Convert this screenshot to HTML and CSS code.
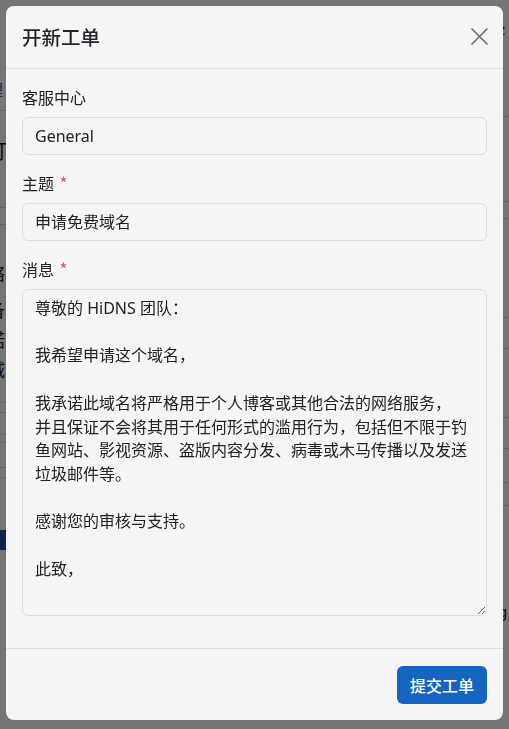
FILE: index.html
```html
<!DOCTYPE html>
<html lang="zh-CN">
<head>
<meta charset="utf-8">
<title>开新工单</title>
<link rel="stylesheet" href="styles.css">
</head>
<body>
<div class="bg">
  <div class="bg-left">
    <div class="bgt blue m80">理</div>
    <div class="bgl m12"></div>
    <div class="bgt big m30">订</div>
    <div class="bgt small m13">的</div>
    <div class="bgl m21"></div>
    <div class="bgl m16"></div>
    <div class="bgt m39">络</div>
    <div class="bgt m18">备</div>
    <div class="bgt m12">诺</div>
    <div class="bgt m12">城</div>
    <div class="bgl m24"></div>
    <div class="bgl m9"></div>
    <div class="bgl m21"></div>
    <div class="bgl m7"></div>
    <div class="bgl m24"></div>
    <div class="bgl m9"></div>
    <div class="bgb m52"></div>
  </div>
  <div class="bg-right">
    <div class="bgr m22">z</div>
    <div class="bgl m80"></div>
    <div class="bgl m84"></div>
    <div class="bgl m16"></div>
    <div class="bgl m98"></div>
    <div class="bgl m30"></div>
    <div class="bgl m68"></div>
    <div class="bgl m30"></div>
    <div class="bgl m33"></div>
    <div class="bgl m22"></div>
    <div class="bgr m98">g</div>
  </div>
</div>

<div class="backdrop">
  <div class="modal">
    <div class="modal-header">
      <h5 class="modal-title">开新工单</h5>
      <button class="btn-close" type="button" aria-label="Close">
        <svg width="17" height="17" viewBox="0 0 17 17"><path d="M1 1L16 16M16 1L1 16" stroke="#6f6f6f" stroke-width="1.7" stroke-linecap="round" fill="none"/></svg>
      </button>
    </div>
    <div class="modal-body">
      <div class="field">
        <label class="label">客服中心</label>
        <div class="input">General</div>
      </div>
      <div class="field">
        <label class="label">主题 <span class="req">*</span></label>
        <div class="input">申请免费域名</div>
      </div>
      <div class="field">
        <label class="label">消息 <span class="req">*</span></label>
        <textarea class="textarea">尊敬的 HiDNS 团队：

我希望申请这个域名，

我承诺此域名将严格用于个人博客或其他合法的网络服务，
并且保证不会将其用于任何形式的滥用行为，包括但不限于钓鱼网站、影视资源、盗版内容分发、病毒或木马传播以及发送垃圾邮件等。

感谢您的审核与支持。

此致，</textarea>
      </div>
    </div>
    <div class="modal-footer">
      <button class="btn-primary" type="button">提交工单</button>
    </div>
  </div>
</div>
</body>
</html>
```

FILE: styles.css
```css
* { box-sizing: border-box; }
html, body { margin: 0; padding: 0; }
body {
  width: 509px;
  height: 729px;
  overflow: hidden;
  background: #ffffff;
  font-family: "Noto Sans", "Noto Sans CJK SC", sans-serif;
  color: #212529;
}

/* background page slivers */
.bg {
  display: flex;
  justify-content: space-between;
  height: 729px;
}
.bg-left { width: 20px; margin-left: -13px; display: flex; flex-direction: column; }
.bg-right { width: 12px; display: flex; flex-direction: column; }
.bgt { font-size: 18px; line-height: 18px; color: #222; font-family: "Noto Sans CJK SC", sans-serif; }
.bgt.blue { color: #1565c0; font-size: 16px; }
.bgt.big { font-size: 20px; line-height: 20px; }
.bgt.small { font-size: 12px; line-height: 12px; color: #888; }
.bgr { font-size: 15px; line-height: 14px; color: #222; padding-left: 1px; }
.bgl { height: 1px; background: #d8d8d8; flex: none; }
.bgb { height: 20px; background: #1a4fa0; flex: none; }
.m7 { margin-top: 7px; } .m9 { margin-top: 9px; } .m12 { margin-top: 12px; }
.m13 { margin-top: 13px; } .m16 { margin-top: 16px; } .m18 { margin-top: 18px; }
.m21 { margin-top: 21px; } .m22 { margin-top: 22px; } .m24 { margin-top: 24px; }
.m30 { margin-top: 30px; } .m33 { margin-top: 33px; } .m36 { margin-top: 36px; }
.m39 { margin-top: 39px; } .m52 { margin-top: 52px; } .m68 { margin-top: 68px; }
.m80 { margin-top: 80px; } .m84 { margin-top: 84px; } .m98 { margin-top: 98px; }

/* overlay */
.backdrop {
  position: fixed;
  inset: 0;
  background: rgba(0, 0, 0, 0.54);
  padding: 6px 6px 9px 6px;
}
.modal {
  width: 497px;
  height: 714px;
  background: #f5f5f5;
  border-radius: 8px;
  display: flex;
  flex-direction: column;
  overflow: hidden;
}
.modal-header {
  height: 63px;
  padding: 0 15px 0 16px;
  display: flex;
  align-items: center;
  justify-content: space-between;
  border-bottom: 1px solid #dedede;
  flex: none;
}
.modal-title {
  margin: 0;
  font-size: 19.5px;
  font-weight: 500;
  line-height: 30px;
  color: #212529;
  font-family: "Noto Sans CJK SC", "Noto Sans", sans-serif;
}
.btn-close {
  border: 0;
  background: transparent;
  padding: 0;
  width: 17px;
  height: 17px;
  display: flex;
  margin-top: -1px;
}
.modal-body {
  flex: 1;
  padding: 16px 16px 0 16px;
  display: flex;
  flex-direction: column;
}
.field { display: flex; flex-direction: column; margin-bottom: 16px; }
.label {
  font-size: 16px;
  line-height: 24px;
  margin-bottom: 8px;
  color: #222;
  font-family: "Noto Sans CJK SC", "Noto Sans", sans-serif;
}
.req {
  color: #e2535f;
  font-family: "Noto Sans CJK SC", sans-serif;
  font-size: 17px;
  margin-left: 2px;
}
.input {
  height: 38px;
  border: 1px solid #dddddd;
  border-radius: 6px;
  background: #f5f5f5;
  padding: 0 12px;
  font-size: 16px;
  line-height: 36px;
  color: #222;
  font-family: "Noto Sans", "Noto Sans CJK SC", sans-serif;
}
.textarea {
  display: block;
  width: 100%;
  height: 327px;
  border: 1px solid #dddddd;
  border-radius: 6px;
  background: #f5f5f5;
  padding: 7px 12px;
  font-size: 16px;
  line-height: 23.7px;
  color: #222;
  font-family: "Noto Sans", "Noto Sans CJK SC", sans-serif;
  resize: vertical;
  outline: none;
  overflow: hidden;
}
.modal-footer {
  height: 72px;
  flex: none;
  border-top: 1px solid #dedede;
  display: flex;
  align-items: center;
  justify-content: flex-end;
  padding: 0 16px;
}
.btn-primary {
  width: 90px;
  height: 38px;
  border: 0;
  border-radius: 6px;
  background: #1565c0;
  color: #ffffff;
  font-size: 16px;
  font-weight: 500;
  font-family: "Noto Sans CJK SC", "Noto Sans", sans-serif;
  margin-top: 1px;
}
```
